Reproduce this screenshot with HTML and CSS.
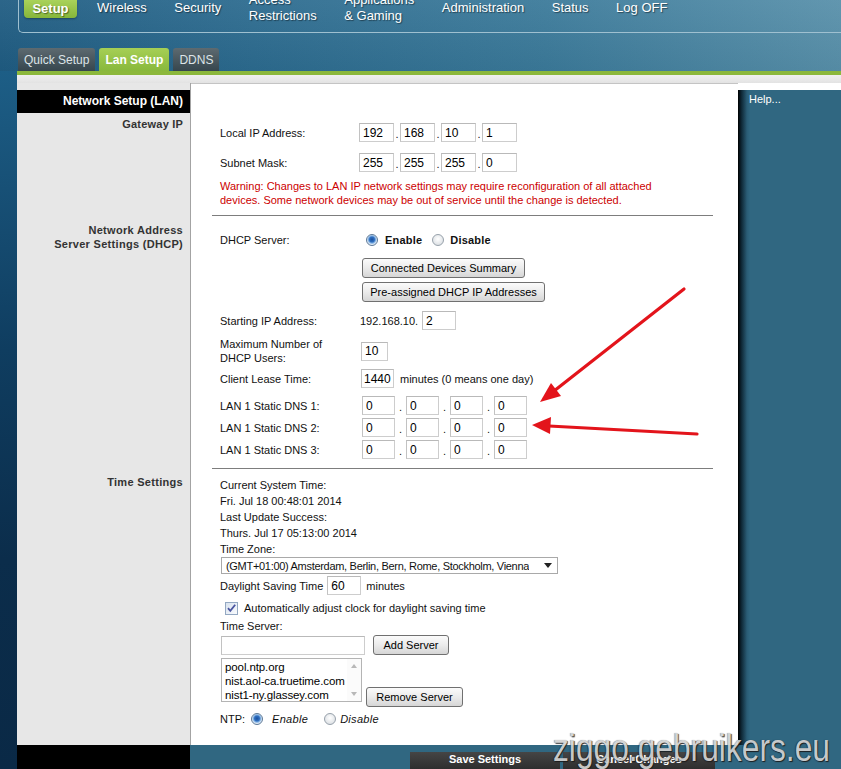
FILE: index.html
```html
<!DOCTYPE html>
<html lang="en">
<head>
    <meta charset="UTF-8">
    <title>Setup - Lan Setup</title>
    <link rel="stylesheet" href="styles.css">
</head>
<body>
    <div class="header">
        <div class="menu">
            <div class="menu-items">
                <span class="menu-item active">Setup</span>
                <span class="menu-item">Wireless</span>
                <span class="menu-item">Security</span>
                <span class="menu-item">Access<br>Restrictions</span>
                <span class="menu-item">Applications<br>&amp; Gaming</span>
                <span class="menu-item">Administration</span>
                <span class="menu-item">Status</span>
                <span class="menu-item">Log OFF</span>
            </div>
        </div>
        <div class="subtabs">
            <span class="subtab">Quick Setup</span>
            <span class="subtab active">Lan Setup</span>
            <span class="subtab">DDNS</span>
        </div>
    </div>

    <div class="page">
        <div class="edge"></div>
        <div class="frame">
            <div class="greenline"></div>
            <div class="grayband"></div>

            <div class="layout">
                <!-- Gateway IP -->
                <div class="side side-first">
                    <div class="side-title">Network Setup (LAN)</div>
                    <div class="side-label">Gateway IP</div>
                </div>
                <div class="panel sec1">
                    <div class="row ip-row">
                        <span class="lbl">Local IP Address:</span>
                        <span class="ip">
                            <input class="field oct" value="192"><span class="dot">.</span>
                            <input class="field oct" value="168"><span class="dot">.</span>
                            <input class="field oct" value="10"><span class="dot">.</span>
                            <input class="field oct" value="1">
                        </span>
                    </div>
                    <div class="row ip-row second">
                        <span class="lbl">Subnet Mask:</span>
                        <span class="ip">
                            <input class="field oct" value="255"><span class="dot">.</span>
                            <input class="field oct" value="255"><span class="dot">.</span>
                            <input class="field oct" value="255"><span class="dot">.</span>
                            <input class="field oct" value="0">
                        </span>
                    </div>
                    <p class="warn">Warning: Changes to LAN IP network settings may require reconfiguration of all attached<br>devices. Some network devices may be out of service until the change is detected.</p>
                    <hr class="sep">
                </div>

                <div class="help">
                    <div class="help-box">Help...</div>
                </div>

                <!-- DHCP -->
                <div class="side side-2">
                    <div class="side-label">Network Address<br>Server Settings (DHCP)</div>
                </div>
                <div class="panel sec2">
                    <div class="row radio-row">
                        <span class="lbl">DHCP Server:</span>
                        <span class="choices">
                            <input type="radio" class="radio" name="dhcp" checked><span class="opt">Enable</span>
                            <input type="radio" class="radio" name="dhcp"><span class="opt last">Disable</span>
                        </span>
                    </div>
                    <div class="btn-row"><button class="btn w-connected">Connected Devices Summary</button></div>
                    <div class="btn-row next"><button class="btn w-preassigned">Pre-assigned DHCP IP Addresses</button></div>
                    <div class="row start-row">
                        <span class="lbl">Starting IP Address:</span>
                        <span class="prefix">192.168.10.</span>
                        <input class="field w-start" value="2">
                    </div>
                    <div class="row max-row">
                        <span class="lbl">Maximum Number of<br>DHCP Users:</span>
                        <input class="field w-max" value="10">
                    </div>
                    <div class="row lease-row">
                        <span class="lbl">Client Lease Time:</span>
                        <input class="field w-lease" value="1440">
                        <span class="unit">minutes (0 means one day)</span>
                    </div>
                    <div class="row dns-row">
                        <span class="lbl">LAN 1 Static DNS 1:</span>
                        <span class="dns">
                            <input class="field dns-oct" value="0"><span class="dns-dot">.</span>
                            <input class="field dns-oct" value="0"><span class="dns-dot">.</span>
                            <input class="field dns-oct" value="0"><span class="dns-dot">.</span>
                            <input class="field dns-oct" value="0">
                        </span>
                    </div>
                    <div class="row dns-row">
                        <span class="lbl">LAN 1 Static DNS 2:</span>
                        <span class="dns">
                            <input class="field dns-oct" value="0"><span class="dns-dot">.</span>
                            <input class="field dns-oct" value="0"><span class="dns-dot">.</span>
                            <input class="field dns-oct" value="0"><span class="dns-dot">.</span>
                            <input class="field dns-oct" value="0">
                        </span>
                    </div>
                    <div class="row dns-row">
                        <span class="lbl">LAN 1 Static DNS 3:</span>
                        <span class="dns">
                            <input class="field dns-oct" value="0"><span class="dns-dot">.</span>
                            <input class="field dns-oct" value="0"><span class="dns-dot">.</span>
                            <input class="field dns-oct" value="0"><span class="dns-dot">.</span>
                            <input class="field dns-oct" value="0">
                        </span>
                    </div>
                    <hr class="sep">
                </div>

                <!-- Time -->
                <div class="side side-3">
                    <div class="side-label">Time Settings</div>
                </div>
                <div class="panel sec3">
                    <div class="line">Current System Time:</div>
                    <div class="line">Fri. Jul 18 00:48:01 2014</div>
                    <div class="line">Last Update Success:</div>
                    <div class="line">Thurs. Jul 17 05:13:00 2014</div>
                    <div class="line">Time Zone:</div>
                    <div class="select">
                        <span class="select-text">(GMT+01:00) Amsterdam, Berlin, Bern, Rome, Stockholm, Vienna</span>
                        <svg class="caret" width="8" height="5" viewBox="0 0 8 5"><path d="M0 0h8L4 5z" fill="#222"/></svg>
                    </div>
                    <div class="row dst-row">
                        <span>Daylight Saving Time</span>
                        <input class="field w-dst" value="60">
                        <span class="unit">minutes</span>
                    </div>
                    <div class="row check-row">
                        <span class="checkbox">
                            <svg width="13" height="13" viewBox="0 0 13 13">
                                <defs>
                                    <linearGradient id="cb" x1="0" y1="0" x2="1" y2="1">
                                        <stop offset="0" stop-color="#d7e1ee"/>
                                        <stop offset="1" stop-color="#fbfcfe"/>
                                    </linearGradient>
                                </defs>
                                <rect x="0.5" y="0.5" width="12" height="12" fill="url(#cb)" stroke="#93a8c2"/>
                                <path d="M3 6.2l2.3 2.6L10.2 2.8" fill="none" stroke="#4a55a0" stroke-width="1.8"/>
                            </svg>
                        </span>
                        <span class="check-text">Automatically adjust clock for daylight saving time</span>
                    </div>
                    <div class="line server-lbl">Time Server:</div>
                    <div class="row server-row">
                        <input class="field w-server" value="">
                        <button class="btn w-add">Add Server</button>
                    </div>
                    <div class="row list-row">
                        <div class="listbox">
                            <div class="list-items">
                                <div>pool.ntp.org</div>
                                <div>nist.aol-ca.truetime.com</div>
                                <div>nist1-ny.glassey.com</div>
                            </div>
                            <div class="scroll">
                                <span class="tri up"></span>
                                <span class="tri down"></span>
                            </div>
                        </div>
                        <button class="btn w-remove">Remove Server</button>
                    </div>
                    <div class="row ntp-row">
                        <span>NTP:</span>
                        <input type="radio" class="radio ntp-radio" name="ntp" checked><span class="ntp-opt">Enable</span>
                        <input type="radio" class="radio ntp-radio second" name="ntp"><span class="ntp-opt">Disable</span>
                    </div>
                </div>
            </div>

            <div class="footer">
                <div class="footer-side"></div>
                <div class="footer-main">
                    <span class="action save">Save Settings</span>
                    <span class="action cancel">Cancel Changes</span>
                </div>
            </div>
        </div>
    </div>

    <svg class="arrows" width="841" height="769" viewBox="0 0 841 769">
        <line x1="684" y1="289" x2="554" y2="391" stroke="#e3141b" stroke-width="3.2" stroke-linecap="round"/>
        <polygon points="540,402 561,396 551,383" fill="#e3141b"/>
        <line x1="697" y1="434" x2="549" y2="426" stroke="#e3141b" stroke-width="3.2" stroke-linecap="round"/>
        <polygon points="532,425 551,417 550,434" fill="#e3141b"/>
    </svg>

    <div class="watermark">ziggo.gebruikers.eu</div>
</body>
</html>
```

FILE: styles.css
```css
* {
    box-sizing: border-box;
}
body {
    margin: 0;
    width: 841px;
    height: 769px;
    overflow: hidden;
    position: relative;
    font-family: "Liberation Sans", Arial, sans-serif;
    font-size: 11px;
    color: #111;
    background: #0d3453;
}

/* top navigation */
.header {
    height: 71px;
    background:
        linear-gradient(180deg, rgba(255,255,255,0.06), rgba(0,0,0,0.04)),
        linear-gradient(90deg, #1f5c82 0%, #2c6b8f 30%, #3b7a9a 65%, #5890aa 100%);
}
.menu {
    height: 33px;
    margin-left: 18px;
    border-left: 1px solid #9fc0d0;
    border-bottom: 1px solid #9fc0d0;
    border-bottom-left-radius: 5px;
}
.menu-items {
    display: flex;
    align-items: center;
    height: 16px;
    padding-left: 5px;
    gap: 27.5px;
}
.menu-item {
    color: #fff;
    font-size: 13px;
    line-height: 16px;
    white-space: nowrap;
    text-shadow: 1px 1px 1px rgba(0,0,0,0.45);
}
.menu-item.active {
    align-self: flex-start;
    width: 53px;
    height: 18px;
    line-height: 17px;
    margin-right: -7.5px;
    text-align: center;
    font-weight: bold;
    background: linear-gradient(#a9d25a, #86b63a);
    border-radius: 0 0 4px 4px;
    box-shadow: 0 1px 2px rgba(0,0,0,0.3);
}
.subtabs {
    display: flex;
    gap: 4px;
    padding-left: 18px;
    margin-top: 15px;
}
.subtab {
    height: 23px;
    line-height: 24px;
    padding: 0 6px;
    font-size: 12px;
    color: #dde4e8;
    background: linear-gradient(#5d6a70, #36464e);
    border-radius: 3px 3px 0 0;
}
.subtab.active {
    color: #fff;
    font-weight: bold;
    background: linear-gradient(#a6cf55, #88b83c);
}

/* page body */
.page {
    display: flex;
    height: 698px;
}
.edge {
    width: 17px;
    flex: none;
    background: linear-gradient(#1d5e86, #0f3d60 40%, #0b2d4b 70%, #0a2946);
}
.frame {
    flex: 1;
    display: flex;
    flex-direction: column;
}
.greenline {
    height: 4px;
    background: #8cb83c;
}
.grayband {
    height: 8px;
    background: linear-gradient(#f0f0f0, #e3e3e3);
}
.layout {
    display: grid;
    grid-template-columns: 173px 548px 103px;
    grid-template-rows: 133px 253px 276px;
}

/* left labels */
.side {
    background: #e7e7e7;
    text-align: right;
    padding-right: 7px;
    font-weight: bold;
    color: #333;
}
.side-title {
    height: 23px;
    line-height: 23px;
    margin: 7px -7px 0 0;
    padding-right: 7px;
    font-size: 12px;
    background: #000;
    color: #fff;
}
.side-label {
    line-height: 14px;
    letter-spacing: 0.3px;
}
.side-first .side-label {
    margin-top: 4px;
    letter-spacing: 0.2px;
}
.side-2 {
    padding-top: 7px;
}
.side-3 {
    padding-top: 6px;
}

/* main white panel */
.panel {
    display: flex;
    flex-direction: column;
    background: #fff;
    border-left: 1px solid #a3a3a3;
    padding-left: 29px;
}
.sec1 {
    padding-top: 40px;
    box-shadow: inset 0 1px 0 #c4c4c4;
}
.sec2 {
    padding-top: 14px;
}
.sec3 {
    padding-top: 8px;
}
.sep {
    margin: auto 25px 0 -8px;
    height: 0;
    border: 0;
    border-top: 1px solid #7d7d7d;
}
.row {
    display: flex;
    align-items: center;
}
.lbl {
    width: 140px;
    flex: none;
}
.field {
    height: 19px;
    margin: 0;
    padding: 0 3px;
    font-family: "Liberation Sans", Arial, sans-serif;
    font-size: 12px;
    color: #000;
    background: #fff;
    border: 1px solid #cdcdcd;
    border-top-color: #b9b9b9;
    border-left-color: #c2c2c2;
    outline: none;
}

/* gateway */
.ip-row {
    height: 19px;
}
.ip-row.second {
    margin-top: 11px;
}
.ip {
    display: flex;
    align-items: center;
    margin-left: -1px;
}
.oct {
    width: 35px;
}
.dot {
    width: 6px;
    text-align: center;
    padding-top: 3px;
}
.warn {
    margin: 7px 0 0;
    line-height: 14px;
    color: #cc0000;
}

/* dhcp */
.radio-row {
    height: 20px;
}
.choices {
    display: flex;
    align-items: center;
    margin-left: 6px;
}
.radio {
    appearance: none;
    -webkit-appearance: none;
    width: 12px;
    height: 12px;
    margin: 0;
    flex: none;
    border-radius: 50%;
    border: 1px solid #97a1ab;
    background: radial-gradient(circle at 50% 40%, #ffffff, #d3d8dd);
}
.radio:checked {
    border-color: #5c7896;
    background: radial-gradient(circle at 50% 45%, #1b4f9c 0, #2f6fc0 2.5px, #8cb8e6 3.8px, #e4edf7 5px);
}
.opt {
    font-weight: bold;
    margin: 0 10px 0 7px;
    letter-spacing: 0.2px;
}
.opt.last {
    margin: 0 0 0 6px;
}
.btn {
    height: 20px;
    margin: 0;
    padding: 0;
    font-family: "Liberation Sans", Arial, sans-serif;
    font-size: 11px;
    color: #000;
    text-align: center;
    background: linear-gradient(#fbfbfb, #ebebeb 50%, #d6d6d6);
    border: 1px solid #707070;
    border-radius: 3px;
}
.btn-row {
    margin: 8px 0 0 142px;
}
.btn-row.next {
    margin-top: 4px;
}
.w-connected {
    width: 163px;
}
.w-preassigned {
    width: 183px;
}
.start-row {
    margin-top: 9px;
    height: 19px;
}
.prefix {
    width: 62px;
    padding-top: 1px;
}
.w-start {
    width: 34px;
}
.max-row {
    margin-top: 7px;
    line-height: 14px;
}
.w-max {
    width: 27px;
    margin-left: 1px;
}
.lease-row {
    margin-top: 4px;
    height: 19px;
}
.w-lease {
    width: 33px;
    margin-left: 1px;
    padding: 0 2px;
}
.unit {
    margin-left: 6px;
}
.dns-row {
    margin-top: 3px;
    height: 19px;
}
.lease-row + .dns-row {
    margin-top: 8px;
}
.dns {
    display: flex;
    align-items: center;
    margin-left: 2px;
}
.dns-oct {
    width: 33px;
}
.dns-dot {
    width: 11px;
    padding: 3px 0 0 4px;
}

/* time settings */
.line {
    line-height: 16px;
}
.select {
    display: flex;
    align-items: center;
    justify-content: space-between;
    width: 337px;
    height: 17px;
    margin-left: 1px;
    padding: 0 5px 0 4px;
    font-size: 11px;
    border: 1px solid #a9a9a9;
    background: #fff;
}
.select-text {
    white-space: nowrap;
    overflow: hidden;
    letter-spacing: -0.3px;
}
.caret {
    flex: none;
    margin-left: 8px;
}
.dst-row {
    margin-top: 2px;
    height: 19px;
}
.w-dst {
    width: 34px;
    margin-left: 4px;
}
.dst-row .unit {
    margin-left: 5px;
}
.check-row {
    margin-top: 6px;
    height: 14px;
}
.checkbox {
    display: flex;
    margin-left: 5px;
}
.check-text {
    margin-left: 6px;
}
.server-lbl {
    margin-top: 3px;
}
.server-row {
    margin-top: 1px;
}
.w-server {
    width: 144px;
    margin-left: 1px;
}
.w-add {
    width: 76px;
    margin-left: 8px;
}
.list-row {
    margin-top: 3px;
    align-items: flex-start;
}
.listbox {
    display: flex;
    width: 141px;
    height: 44px;
    margin-left: 1px;
    border: 1px solid #b4b4b4;
    font-size: 11.5px;
    line-height: 14px;
    color: #000;
}
.list-items {
    flex: 1;
    padding: 1px 0 0 3px;
    white-space: nowrap;
    overflow: hidden;
    letter-spacing: -0.1px;
}
.scroll {
    width: 14px;
    flex: none;
    display: flex;
    flex-direction: column;
    justify-content: space-between;
    align-items: center;
    padding: 5px 0;
    background: #fbfbfb;
}
.tri {
    width: 0;
    height: 0;
    border-left: 3.5px solid transparent;
    border-right: 3.5px solid transparent;
}
.tri.up {
    border-bottom: 4px solid #b8b8b8;
}
.tri.down {
    border-top: 4px solid #b8b8b8;
}
.w-remove {
    width: 97px;
    margin: 29px 0 0 4px;
}
.ntp-row {
    margin-top: 5px;
    height: 14px;
}
.ntp-radio {
    margin-left: 6px;
}
.ntp-radio.second {
    margin-left: 16px;
}
.ntp-opt {
    font-style: italic;
    margin-left: 9px;
    letter-spacing: 0.3px;
}
.ntp-radio.second + .ntp-opt {
    margin-left: 4px;
}

/* help column */
.help {
    grid-column: 3;
    grid-row: 1 / 4;
    display: flex;
    flex-direction: column;
    padding-top: 7px;
    background: #fff;
}
.help-box {
    flex: 1;
    padding: 2px 11px;
    line-height: 14px;
    color: #fff;
    background: linear-gradient(90deg, #000 0, #0c2330 3px, #2a5d76 9px, #306781 12px);
}

/* footer */
.footer {
    display: flex;
    height: 24px;
}
.footer-side {
    width: 173px;
    background: #000;
}
.footer-main {
    flex: 1;
    display: flex;
    align-items: flex-start;
    padding: 7px 0 0 220px;
    background: #306781;
}
.action {
    height: 17px;
    line-height: 15px;
    text-align: center;
    font-weight: bold;
    color: #fff;
    background: linear-gradient(#454545, #2e2e2e);
}
.save {
    width: 150px;
}
.cancel {
    width: 152px;
    margin-left: 3px;
}

/* overlays */
.arrows {
    position: absolute;
    top: 0;
    left: 0;
    pointer-events: none;
}
.watermark {
    position: absolute;
    left: 553px;
    top: 729px;
    font-family: "Liberation Sans", Arial, sans-serif;
    font-size: 38px;
    line-height: 38px;
    color: #d2d2d2;
    white-space: nowrap;
    transform: scaleX(0.835);
    transform-origin: left top;
    text-shadow: 1px 1px 1px #1a1a1a, -1px 0 1px rgba(0,0,0,0.4);
    opacity: 0.92;
}
```
